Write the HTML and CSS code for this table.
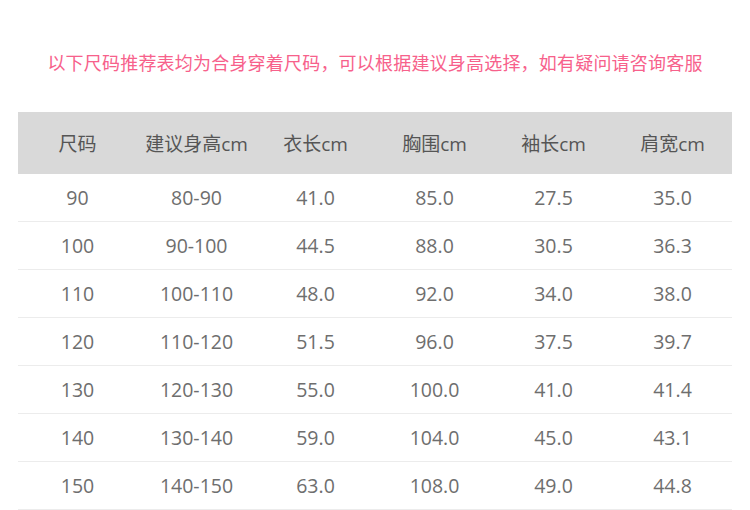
FILE: index.html
```html
<!DOCTYPE html>
<html lang="zh-CN">
<head>
<meta charset="utf-8">
<link rel="stylesheet" href="styles.css">
</head>
<body>
<div class="page">
  <p class="notice">以下尺码推荐表均为合身穿着尺码，可以根据建议身高选择，如有疑问请咨询客服</p>
  <table class="size-table">
    <thead>
      <tr><th>尺码</th><th>建议身高cm</th><th>衣长cm</th><th>胸围cm</th><th>袖长cm</th><th>肩宽cm</th></tr>
    </thead>
    <tbody>
      <tr><td>90</td><td>80-90</td><td>41.0</td><td>85.0</td><td>27.5</td><td>35.0</td></tr>
      <tr><td>100</td><td>90-100</td><td>44.5</td><td>88.0</td><td>30.5</td><td>36.3</td></tr>
      <tr><td>110</td><td>100-110</td><td>48.0</td><td>92.0</td><td>34.0</td><td>38.0</td></tr>
      <tr><td>120</td><td>110-120</td><td>51.5</td><td>96.0</td><td>37.5</td><td>39.7</td></tr>
      <tr><td>130</td><td>120-130</td><td>55.0</td><td>100.0</td><td>41.0</td><td>41.4</td></tr>
      <tr><td>140</td><td>130-140</td><td>59.0</td><td>104.0</td><td>45.0</td><td>43.1</td></tr>
      <tr><td>150</td><td>140-150</td><td>63.0</td><td>108.0</td><td>49.0</td><td>44.8</td></tr>
    </tbody>
  </table>
</div>
</body>
</html>
```
FILE: styles.css
```css
html, body {
  margin: 0;
  padding: 0;
  background: #fff;
}
.page {
  width: 750px;
  padding: 0 18px;
  box-sizing: border-box;
  font-family: "Open Sans", "Noto Sans CJK SC", sans-serif;
}
.notice {
  margin: 0;
  padding-top: 49px;
  height: 63px;
  box-sizing: content-box;
  line-height: 26px;
  font-size: 18px;
  letter-spacing: 0.2px;
  color: #f7618b;
  text-align: center;
  font-family: "Noto Sans CJK SC", sans-serif;
}
.size-table {
  width: 714px;
  border-collapse: collapse;
  table-layout: fixed;
}
.size-table th {
  height: 62px;
  padding: 0;
  background: #d9d9d9;
  font-weight: normal;
  font-size: 19px;
  color: #555;
  text-align: center;
}
.size-table td {
  height: 47px;
  padding: 0;
  border-bottom: 1px solid #ececec;
  font-size: 19.5px;
  color: #6e6e6e;
  text-align: center;
}
```
